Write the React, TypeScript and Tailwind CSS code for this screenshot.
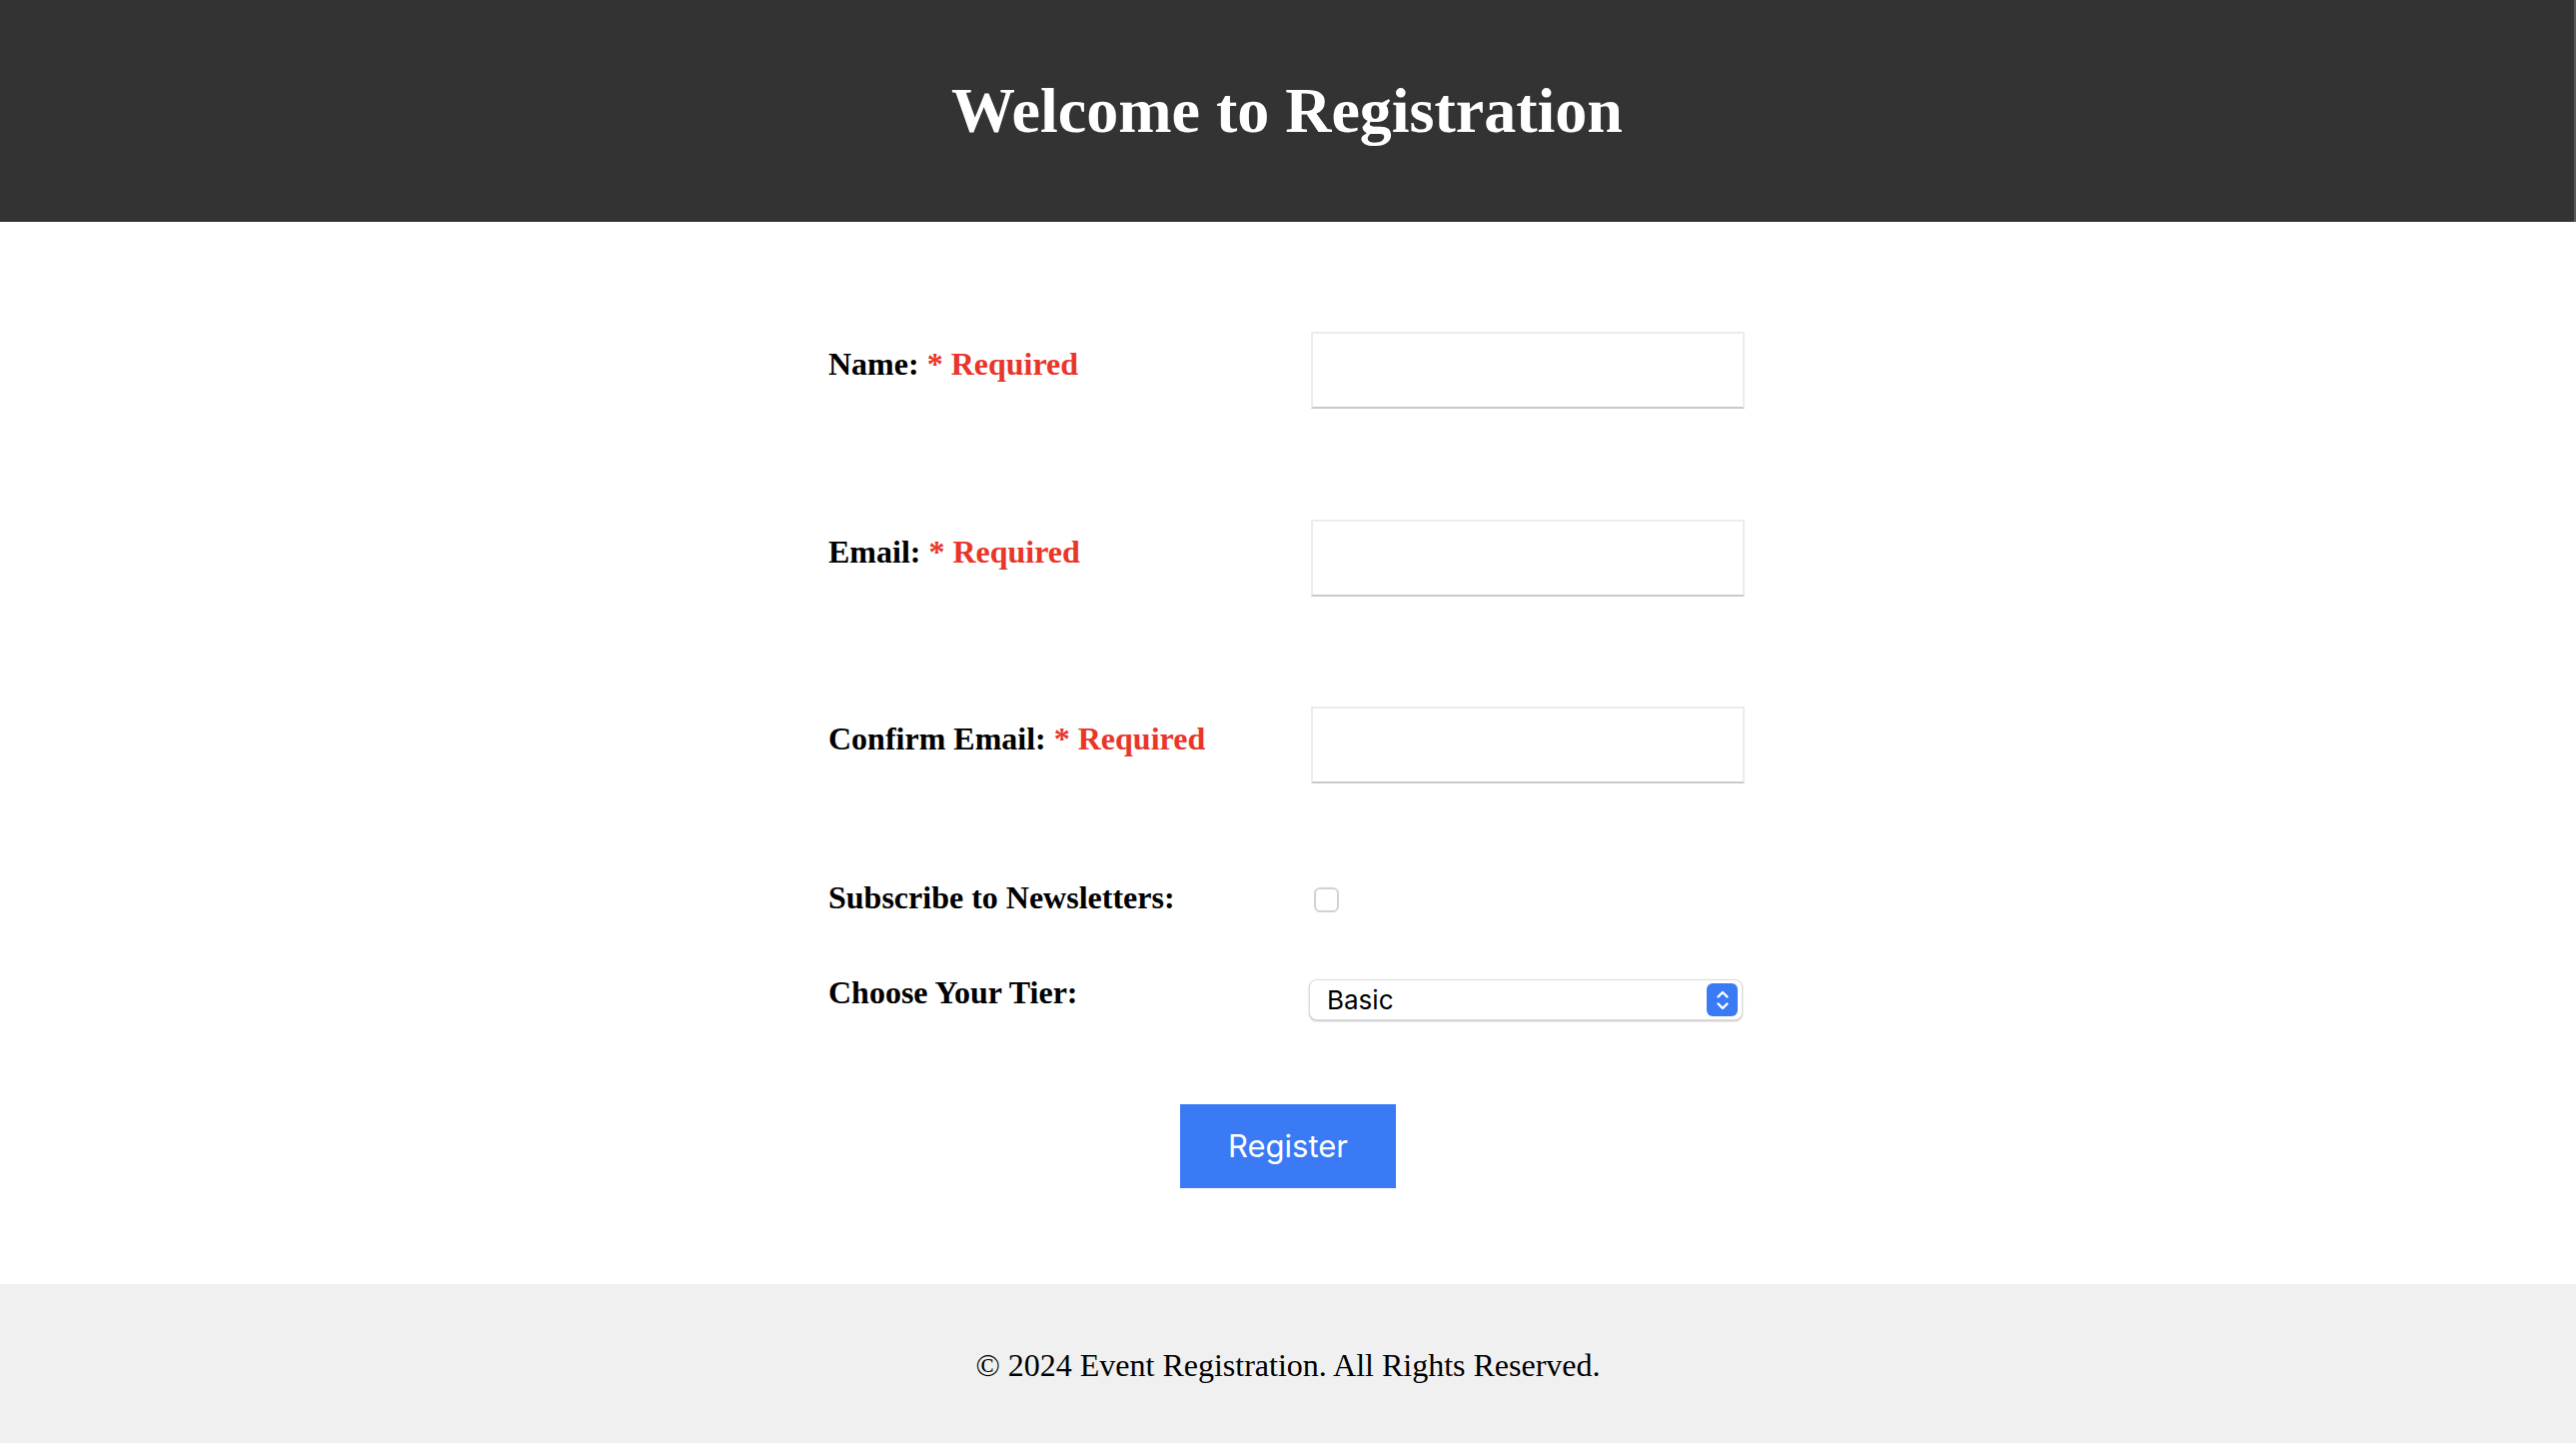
import { useState } from "react";

const serif = "font-['Liberation_Serif','Times_New_Roman',serif]";
const sans = "font-['Inter','Liberation_Sans',sans-serif]";

function Required() {
  return <span className="text-[#e9352a]">* Required</span>;
}

function TextRow({ label, height }: { label: string; height: string }) {
  return (
    <div className={`flex items-start ${height}`}>
      <label className="w-[483px] pt-[14px] font-bold">
        {label}: <Required />
      </label>
      <input
        type="text"
        className="w-[434px] h-[77px] bg-white border-2 border-[#ececec] border-b-[#c9c9c9] outline-none px-3"
      />
    </div>
  );
}

export default function App() {
  const [subscribed, setSubscribed] = useState(false);

  return (
    <div className={`min-h-screen bg-white text-black ${serif} text-[32px] leading-[1.15]`}>
      {/* Header */}
      <header className="h-[222px] bg-[#333333] border-r-2 border-[#585858] flex items-center justify-center">
        <h1 className="text-[64px] font-bold text-white">Welcome to Registration</h1>
      </header>

      {/* Form */}
      <main className="pt-[110px] pb-[96px] flex flex-col items-center">
        <form className="w-[920px] flex flex-col" onSubmit={(e) => e.preventDefault()}>
          <TextRow label="Name" height="h-[188px]" />
          <TextRow label="Email" height="h-[187px]" />
          <TextRow label="Confirm Email" height="h-[173px]" />

          <div className="flex items-start h-[95px]">
            <label className="w-[483px] font-bold">Subscribe to Newsletters:</label>
            <button
              type="button"
              onClick={() => setSubscribed(!subscribed)}
              className="mt-[8px] ml-[3px] w-[25px] h-[25px] rounded-[6px] border-2 border-[#d2d2d2] bg-white flex items-center justify-center"
            >
              {subscribed && <span className="w-[11px] h-[11px] rounded-sm bg-[#3a7bf5]" />}
            </button>
          </div>

          <div className="flex items-start">
            <label className="w-[481px] font-bold">Choose Your Tier:</label>
            <div
              className={`mt-[5px] w-[434px] h-[41px] rounded-[8px] bg-white border border-[#dcdcdc] shadow-[0_1px_2px_rgba(0,0,0,0.25)] flex items-center justify-between pl-[17px] pr-[4px] ${sans} text-[26px] leading-none`}
            >
              <span>Basic</span>
              <span className="w-[31px] h-[33px] rounded-[6px] bg-[#3a7bf5] flex items-center justify-center">
                <svg width="16" height="24" viewBox="0 0 16 24" fill="none" stroke="white" strokeWidth="2.4" strokeLinecap="round" strokeLinejoin="round">
                  <path d="M3.5 8.5 L8 4 L12.5 8.5" />
                  <path d="M3.5 15.5 L8 20 L12.5 15.5" />
                </svg>
              </span>
            </div>
          </div>

          <div className="flex justify-center mt-[84px]">
            <button
              type="submit"
              className={`w-[216px] h-[84px] bg-[#3a7bf5] text-white ${sans} text-[31px]`}
            >
              Register
            </button>
          </div>
        </form>
      </main>

      {/* Footer */}
      <footer className="h-[162px] bg-[#f0f0f0] flex items-center justify-center">
        <p>© 2024 Event Registration. All Rights Reserved.</p>
      </footer>
    </div>
  );
}
